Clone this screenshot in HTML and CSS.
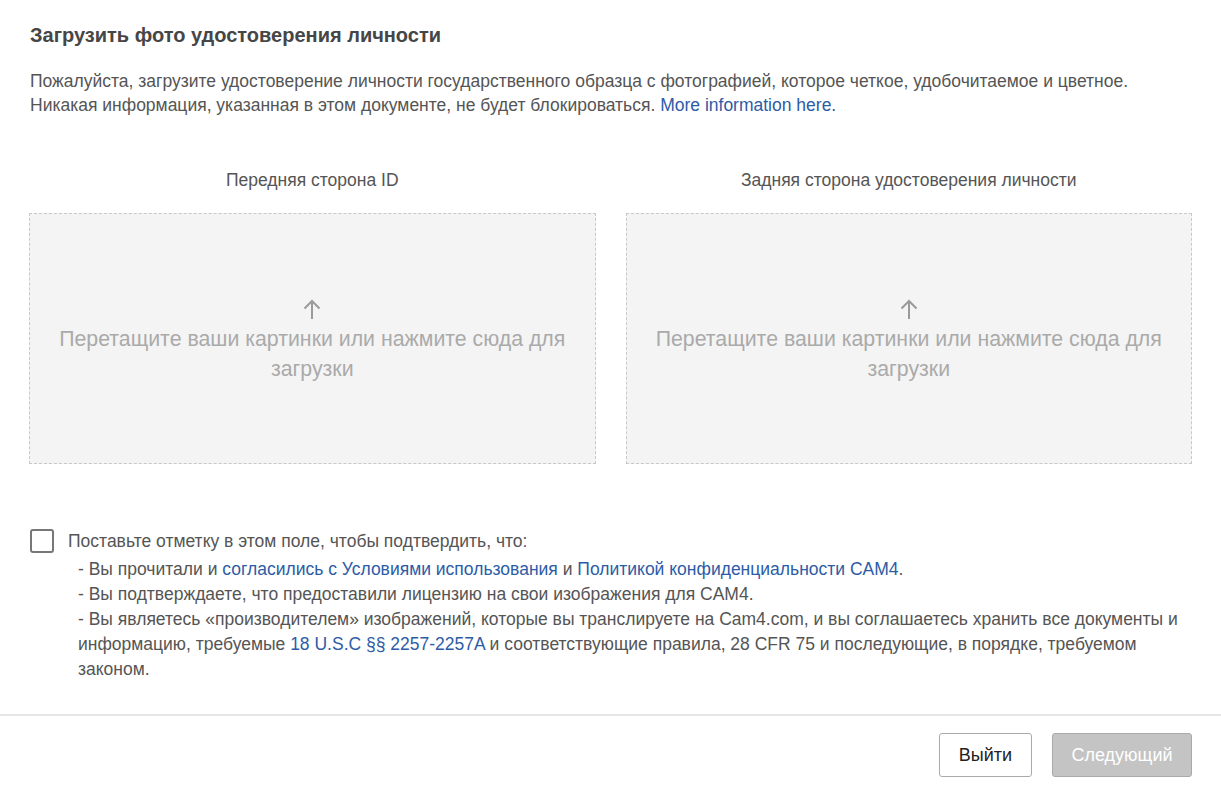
FILE: index.html
```html
<!DOCTYPE html>
<html lang="ru">
<head>
  <meta charset="UTF-8">
  <title>Загрузить фото удостоверения личности</title>
  <link rel="stylesheet" href="styles.css">
</head>
<body>
  <div class="page">
    <h2 class="title">Загрузить фото удостоверения личности</h2>
    <p class="intro">
      Пожалуйста, загрузите удостоверение личности государственного образца с фотографией, которое четкое, удобочитаемое и цветное.<br>
      Никакая информация, указанная в этом документе, не будет блокироваться. <a href="#">More information here.</a>
    </p>

    <div class="uploads">
      <div class="upload">
        <div class="upload-label">Передняя сторона ID</div>
        <div class="dropzone">
          <svg class="arrow" width="22" height="22" viewBox="0 0 22 22"><path d="M11 21V3M3.5 10.5L11 3l7.5 7.5" fill="none" stroke="#9a9a9a" stroke-width="2"/></svg>
          <div class="drop-text">Перетащите ваши картинки или нажмите сюда для загрузки</div>
        </div>
      </div>
      <div class="upload">
        <div class="upload-label">Задняя сторона удостоверения личности</div>
        <div class="dropzone">
          <svg class="arrow" width="22" height="22" viewBox="0 0 22 22"><path d="M11 21V3M3.5 10.5L11 3l7.5 7.5" fill="none" stroke="#9a9a9a" stroke-width="2"/></svg>
          <div class="drop-text">Перетащите ваши картинки или нажмите сюда для загрузки</div>
        </div>
      </div>
    </div>

    <div class="consent">
      <span class="checkbox"></span>
      <div class="consent-text">
        <div>Поставьте отметку в этом поле, чтобы подтвердить, что:</div>
        <ul class="terms">
          <li>- Вы прочитали и <a href="#">согласились с Условиями использования</a> и <a href="#">Политикой конфиденциальности CAM4</a>.</li>
          <li>- Вы подтверждаете, что предоставили лицензию на свои изображения для CAM4.</li>
          <li>- Вы являетесь «производителем» изображений, которые вы транслируете на Cam4.com, и вы соглашаетесь хранить все документы и информацию, требуемые <a href="#">18 U.S.C §§ 2257-2257A</a> и соответствующие правила, 28 CFR 75 и последующие, в порядке, требуемом законом.</li>
        </ul>
      </div>
    </div>
  </div>

  <div class="footer">
    <button class="btn btn-exit">Выйти</button>
    <button class="btn btn-next" disabled>Следующий</button>
  </div>
</body>
</html>
```

FILE: styles.css
```css
* { box-sizing: border-box; }
body {margin: 0;font-family: "Liberation Sans", Arial, sans-serif;color: #555;background: #fff;}
a {color: #2d5ca6;text-decoration: none;}
.page {padding: 23px 29px 0 29px;}
.title {margin: 0;font-size: 20px;line-height: 24px;font-weight: bold;color: #464646;padding-left: 1px;}
.intro {margin: 22px 0 0;font-size: 17.5px;line-height: 24px;padding-left: 1px;}
.uploads {display: grid;grid-template-columns: 1fr 1fr;gap: 30px;margin-top: 51px;}
.upload-label {text-align: center;font-size: 17.5px;line-height: 24px;margin-bottom: 21px;}
.dropzone {height: 251px;background: #f4f4f4;border: 1px dashed #c8c8c8;display: flex;flex-direction: column;align-items: center;justify-content: center;padding: 4px 28px 0;}
.arrow {display: block;margin-bottom: 4px;}
.drop-text {text-align: center;font-size: 21.3px;line-height: 30px;color: #aaa;}
.consent {display: flex;align-items: flex-start;margin-top: 65px;padding-left: 1px;}
.checkbox {flex: none;width: 24px;height: 24px;border: 2px solid #777;border-radius: 3px;}
.consent-text {margin-left: 14px;font-size: 17.5px;line-height: 24px;}
.terms {list-style: none;margin: 4px 0 0;padding: 0 0 0 10px;line-height: 25px;}
.footer {margin-top: 32px;border-top: 2px solid #e6e6e6;display: flex;justify-content: flex-end;gap: 20px;padding: 17px 29px 0;}
.btn {height: 44px;font-family: "Liberation Sans", Arial, sans-serif;font-size: 18px;border: 1px solid #aaa;border-radius: 3px;padding: 0;}
.btn-exit {background: #fff;color: #222;width: 93px;}
.btn-next {background: #c4c4c4;color: #fff;width: 140px;}
```
